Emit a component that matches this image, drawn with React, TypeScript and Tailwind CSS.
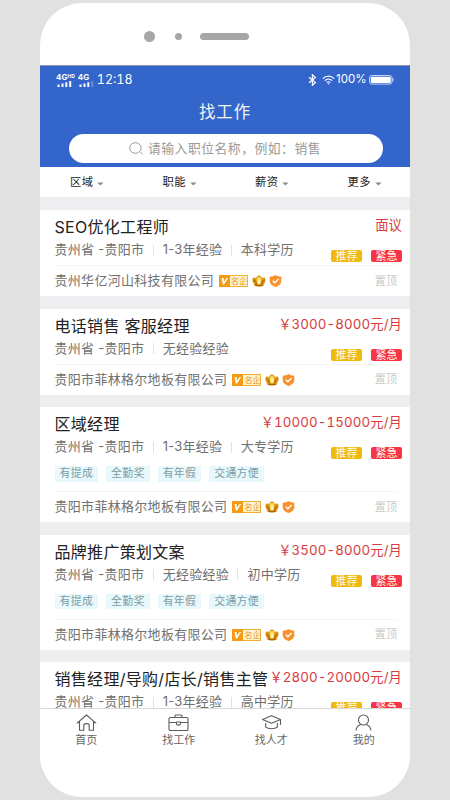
import clsx from "clsx";

interface Job {
  title: string;
  salary: string;
  meta: string[];
  tags?: string[];
  company?: string;
}

const perks = ["有提成", "全勤奖", "有年假", "交通方便"];

const jobs: Job[] = [
  {
    title: "SEO优化工程师",
    salary: "面议",
    meta: ["1-3年经验", "本科学历"],
    company: "贵州华亿河山科技有限公司",
  },
  {
    title: "电话销售 客服经理",
    salary: "￥3000-8000元/月",
    meta: ["无经验经验"],
    company: "贵阳市菲林格尔地板有限公司",
  },
  {
    title: "区域经理",
    salary: "￥10000-15000元/月",
    meta: ["1-3年经验", "大专学历"],
    tags: perks,
    company: "贵阳市菲林格尔地板有限公司",
  },
  {
    title: "品牌推广策划文案",
    salary: "￥3500-8000元/月",
    meta: ["无经验经验", "初中学历"],
    tags: perks,
    company: "贵阳市菲林格尔地板有限公司",
  },
  {
    title: "销售经理/导购/店长/销售主管",
    salary: "￥2800-20000元/月",
    meta: ["1-3年经验", "高中学历"],
  },
];

function Signal({ hd }: { hd?: boolean }) {
  return (
    <div className="flex flex-col">
      <div className="flex h-[7px] items-start text-[8px] leading-[7px] font-bold">
        4G{hd && <span className="text-[5px] leading-[5px]">HD</span>}
      </div>
      <svg width="17" height="6" viewBox="0 0 17 6" fill="#fff">
        <rect x="1.5" y="3.5" width="2" height="2.5" />
        <rect x="5.5" y="2.5" width="2" height="3.5" />
        <rect x="9.3" y="1.3" width="2" height="4.7" />
        <rect x="13.2" y="0" width="2" height="6" opacity={hd ? 1 : 0.25} />
      </svg>
    </div>
  );
}

function StatusBar() {
  return (
    <div className="flex h-[28px] items-center pr-[16px] pl-[16px] text-white">
      <Signal hd />
      <div className="ml-[3px]">
        <Signal />
      </div>
      <span className="ml-[2px] text-[12.5px] tabular-nums">12:18</span>
      <svg className="ml-auto" width="9" height="12" viewBox="0 0 9 12" fill="none" stroke="#fff" strokeWidth="1.2">
        <path d="M1 3.3 7.4 8.6 4.4 11.2V.8l3 2.6L1 8.7" />
      </svg>
      <svg className="ml-[5px]" width="13" height="10" viewBox="0 0 13 10" fill="none" stroke="#fff" strokeWidth="1.2">
        <path d="M.8 3.6C4 .4 9 .4 12.2 3.6M2.8 5.6c2.1-2 5.3-2 7.4 0M4.7 7.5c1-1 2.6-1 3.6 0" />
        <circle cx="6.5" cy="8.8" r=".7" fill="#fff" stroke="none" />
      </svg>
      <span className="ml-[1px] w-[32px] text-[11.5px]">100%</span>
      <svg className="ml-[1px]" width="25" height="10" viewBox="0 0 25 10">
        <rect x=".5" y=".5" width="22.5" height="8.6" rx="2.2" fill="none" stroke="#c5d4f0" />
        <rect x="1.8" y="1.7" width="20" height="6.2" rx="1" fill="#fff" />
        <path d="M23.6 3.2c1.4.4 1.4 2.8 0 3.2z" fill="#fff" />
      </svg>
    </div>
  );
}

function Header() {
  return (
    <div className="h-[102px] border-t border-[#8f949f] bg-[#3365cb]">
      <StatusBar />
      <h1 className="h-[36px] text-center text-[16.5px] leading-[36px] tracking-[0.8px] text-[#f0f6f4]">找工作</h1>
      <div className="mt-[4px] mr-[27px] ml-[29px] flex h-[29px] items-center justify-center rounded-full bg-white pr-[2px]">
        <svg width="14" height="13" viewBox="0 0 14 13" fill="none" stroke="#999" strokeWidth="1">
          <ellipse cx="6.4" cy="6" rx="5.7" ry="5.3" />
          <path d="m11.2 10.2 2.2 1.9" />
        </svg>
        <span className="ml-[5px] text-[12.8px] tracking-[0.52px] text-[#9a9a9a]">请输入职位名称，例如：销售</span>
      </div>
    </div>
  );
}

function Filters() {
  return (
    <div className="grid h-[30px] shrink-0 grid-cols-4 bg-white">
      {["区域", "职能", "薪资", "更多"].map((name) => (
        <div key={name} className="flex items-center justify-center pl-[2px] text-[11.3px] tracking-[0.4px] text-[#222]">
          {name}
          <svg className="mt-[3px] ml-[4px]" width="7" height="4" viewBox="0 0 7 4">
            <path d="M.3.4h6.2L3.4 3.400z" fill="#8b8b8b" />
          </svg>
        </div>
      ))}
    </div>
  );
}

function CompanyBadges() {
  return (
    <>
      <span className="ml-[5px] flex h-[12px] w-[29px] shrink-0 border border-[#efad3a] bg-[#fdf1d0]">
        <svg className="-m-px shrink-0 bg-[#f59a13]" width="11" height="12" viewBox="0 0 11 12">
          <path d="M2.6 3h2l.3 3.7L7.6 3h1.6L5 9.5H3.8z" fill="#fff" />
        </svg>
        <span className="ml-[2px] text-[8px] leading-[10px] tracking-normal text-[#e79a1e]">名企</span>
      </span>
      <svg className="ml-[4px]" width="14" height="12" viewBox="0 0 14 12">
        <path d="M2.5 10.8C2 8.2 0 7 .5 4.2 1.2 2 2.9 2.4 4 3.4 4.4 1.7 5.5.8 7 .5c1.5.3 2.6 1.2 3 2.9 1.1-1 2.8-1.4 3.5.8.5 2.8-1.5 4-2 6.6-2.6 1-6.4 1-9 0z" fill="#dd9510" />
        <path d="M1.6 5.4c1.5 0 2.4 1.2 2.8 3.8M12.4 5.4c-1.5 0-2.4 1.2-2.8 3.8" fill="none" stroke="#8d4f0a" strokeWidth=".8" />
        <path d="M4.6 4.5C5 3.1 5.8 2.2 7 1.8c1.2.4 2 1.3 2.4 2.7L8.6 9H5.4z" fill="#ffdc55" />
        <path d="M7 3.4 8.5 7 7 9.4 5.5 7z" fill="#fff1bd" />
        <path d="M3 10.2c2.5.8 5.5.8 8 0" fill="none" stroke="#9a5709" strokeWidth=".9" />
      </svg>
      <svg className="ml-[3px]" width="13" height="12" viewBox="0 0 13 12">
        <path d="M6.5 0c1.6 1.1 3.5 1.6 5.8 1.8v4.1c0 3-2.5 5-5.8 6.1C3.2 10.9.7 8.9.7 5.9V1.8C3 1.6 4.9 1.1 6.5 0z" fill="#f7922d" />
        <path d="m3.7 5.7 2.2 2.1 3.7-3.7" fill="none" stroke="#fff" strokeWidth="1.4" />
      </svg>
    </>
  );
}

function Label({ text, urgent }: { text: string; urgent?: boolean }) {
  return (
    <span
      className={clsx(
        "h-[12px] w-[31px] rounded-[2px] text-center text-[11px] leading-[12px] text-[#fffbe9]",
        urgent ? "bg-[#f73645]" : "bg-[#f0b911]"
      )}
    >
      {text}
    </span>
  );
}

function JobCard({ job }: { job: Job }) {
  return (
    <div className="mb-[12.5px] shrink-0 bg-white pt-[5px] pr-[8px] pl-[14.5px] whitespace-nowrap">
      <div className="flex h-[24px] justify-between">
        <h2 className="text-[16px] leading-[24px] tracking-[0.3px] text-[#222]">{job.title}</h2>
        <span className="-ml-[8px] text-[13.3px] leading-[20px] tracking-[0.12px] text-[#d83b40] tabular-nums">{job.salary}</span>
      </div>
      <div className="mt-px flex h-[25px] items-start">
        <div className="flex h-[20px] items-center text-[13px] tracking-[0.25px] text-[#707070]">
          贵州省 -贵阳市
          {job.meta.map((item) => (
            <span key={item} className="ml-[8.5px] flex items-center">
              <i className="mr-[9px] h-[11px] w-px bg-[#e2e2e2]" />
              {item}
            </span>
          ))}
        </div>
        <div className="mt-[10px] ml-auto flex gap-[9px]">
          <Label text="推荐" />
          <Label text="紧急" urgent />
        </div>
      </div>
      {job.tags && (
        <div className="flex h-[29px] gap-[8px] pt-[4px]">
          {job.tags.map((tag) => (
            <span key={tag} className="h-[15.5px] bg-[#e8f9fd] px-[5px] text-[10.9px] leading-[15.5px] tracking-[0.3px] text-[#7f9ba1]">
              {tag}
            </span>
          ))}
        </div>
      )}
      {job.company && (
        <div className="mr-[5px] flex h-[31px] items-center border-t border-[#f5f5f5] text-[13px] tracking-[0.3px] text-[#707070]">
          <span>{job.company}</span>
          <CompanyBadges />
          <span className="ml-auto text-[11px] tracking-[0.1px] text-[#c9c9c9]">置顶</span>
        </div>
      )}
    </div>
  );
}

const tabs = [
  {
    name: "首页",
    icon: <path d="M.8 9.3 10.5 1l9.7 8.3M3.5 7.5v8.7h4.300v-4.700c0-2.500 5.400-2.500 5.400 0v4.700h4.300V7.500" />,
  },
  {
    name: "找工作",
    icon: (
      <>
        <rect x="1" y="3.5" width="19" height="13" rx="1.3" />
        <path d="M7 3.5V1.8c0-.5.3-.8.8-.8h5.4c.5 0 .8.3.8.8v1.7M1 8.5h7.5M12.5 8.5H20M8.5 8v1.5c0 2.2 4 2.2 4 0V8z" />
      </>
    ),
  },
  {
    name: "找人才",
    icon: <path d="M1.5 5.5 10.5 1.8l9 3.7-9 3.7zM4.7 9v4.2c2.5 2.1 9.1 2.1 11.6 0V9M19.5 5.5v5.6" />,
  },
  {
    name: "我的",
    icon: (
      <>
        <circle cx="10.5" cy="6" r="5" />
        <path d="M3 16.5c.3-3 2-5 4.8-6M18 16.5c-.3-3-2-5-4.8-6" />
      </>
    ),
  },
];

function TabBar() {
  return (
    <div className="grid h-[89px] shrink-0 grid-cols-4 border-t border-[#d8d8d8] bg-white">
      {tabs.map((tab) => (
        <div key={tab.name} className="flex flex-col items-center pt-[5px] text-[11px] leading-[17px] text-[#666]">
          <svg width="21" height="18" viewBox="0 0 21 18" fill="none" stroke="#5c5c5c" strokeWidth="1.1" strokeLinejoin="round">
            {tab.icon}
          </svg>
          {tab.name}
        </div>
      ))}
    </div>
  );
}

export default function App() {
  return (
    <div className="flex h-screen w-full justify-center overflow-hidden bg-[#e1e1e1] pt-[3px] font-['Inter','Noto_Sans_CJK_SC',sans-serif]">
      <div className="flex h-[794px] w-[370px] flex-col overflow-hidden rounded-[42px] bg-white">
        {/* speaker and camera */}
        <div className="flex h-[62px] shrink-0 items-center pt-[5px] pl-[104px]">
          <i className="h-[11px] w-[11px] rounded-full bg-[#a6a6a6]" />
          <i className="ml-[20px] h-[7px] w-[7px] rounded-full bg-[#a6a6a6]" />
          <i className="ml-[18px] h-[7px] w-[49px] rounded-full bg-[#a6a6a6]" />
        </div>
        <Header />
        <Filters />
        <div className="flex min-h-0 flex-1 flex-col overflow-hidden bg-[#eeedf0] pt-[13px]">
          {jobs.map((job) => (
            <JobCard key={job.title} job={job} />
          ))}
        </div>
        <TabBar />
      </div>
    </div>
  );
}
